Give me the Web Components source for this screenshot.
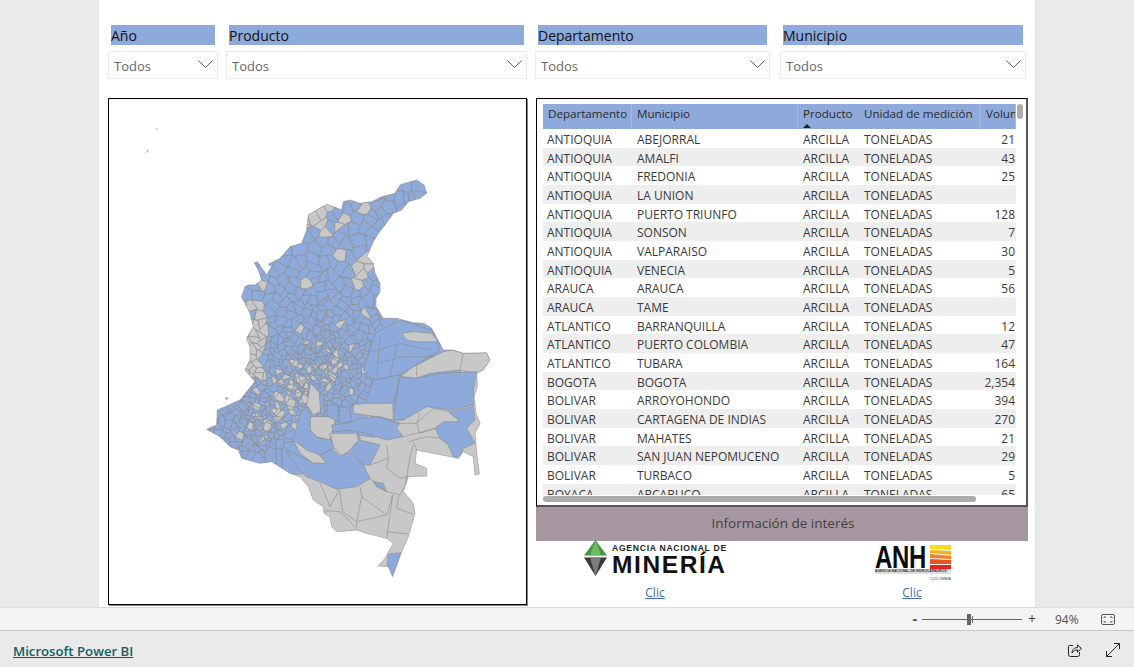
<!DOCTYPE html>
<html lang="es">
<head>
<meta charset="utf-8">
<title>Microsoft Power BI</title>
<style>
  html, body { margin: 0; height: 100%; overflow: hidden; background: #eaeaea; font-family: "Open Sans", "Noto Sans", sans-serif; }
</style>
</head>
<body>
<bi-report>
  <bi-slicer slot="slicers" label="Año" style="width:110px"></bi-slicer>
  <bi-slicer slot="slicers" label="Producto" style="width:301px"></bi-slicer>
  <bi-slicer slot="slicers" label="Departamento" style="width:235px"></bi-slicer>
  <bi-slicer slot="slicers" label="Municipio" style="width:246px;margin-left:2px"></bi-slicer>
  <bi-map slot="map"></bi-map>
  <bi-table slot="table"></bi-table>
  <bi-links slot="links"></bi-links>
</bi-report>
<bi-footer></bi-footer>

<script>
const BLUE = "#8eaadb";

class BiReport extends HTMLElement {
  constructor() {
    super();
    this.attachShadow({ mode: "open" });
    this.shadowRoot.innerHTML = `
<style>
  :host { display: block; width: 936px; height: 607px; margin-left: 99px; background: #fff; box-sizing: border-box; padding: 25px 0 0 9px; }
  .slicers { display: flex; gap: 8px; height: 54px; margin-bottom: 19px; }
  .body { display: flex; gap: 8px; height: 507px; }
  .right { width: 492px; margin-left: 1px; display: flex; flex-direction: column; }
  .band { height: 34px; background: #a797a1; color: #3f3f3f; font-size: 13.5px; line-height: 32px; text-align: center; padding-left: 2px; box-sizing: border-box; }
</style>
<div class="slicers"><slot name="slicers"></slot></div>
<div class="body">
  <slot name="map"></slot>
  <div class="right">
    <slot name="table"></slot>
    <div class="band">Información de interés</div>
    <slot name="links"></slot>
  </div>
</div>`;
  }
}

class BiSlicer extends HTMLElement {
  constructor() {
    super();
    this.attachShadow({ mode: "open" });
    this.shadowRoot.innerHTML = `
<style>
  :host { display: block; }
  .label { margin: 0 3px; height: 20px; background: ${BLUE}; color: #111; font-size: 14px; line-height: 21px; white-space: nowrap; overflow: hidden; }
  .box { margin-top: 6px; height: 25px; border: 1px solid #eaeaea; display: flex; align-items: center; justify-content: space-between; padding: 1px 4px 0 5px; color: #666; font-size: 13px; }
  svg { display: block; margin-top: -4px; }
</style>
<div class="label"></div>
<div class="box"><span>Todos</span>
  <svg width="15" height="8" viewBox="0 0 15 8"><path d="M.5.5l7 7 7-7" fill="none" stroke="#666" stroke-width="1"/></svg>
</div>`;
    this.shadowRoot.querySelector(".label").textContent = this.getAttribute("label");
  }
}

// coordinates below are in 1/3 px, origin at page (200,170)
const OUTLINE = [[600,45],[620,38],[650,30],[672,45],[680,70],[660,85],[625,95],[605,120],[580,130],[555,165],[535,190],[520,215],[500,260],[507,265],[520,280],[525,310],[540,340],[540,365],[528,385],[528,410],[550,445],[590,445],[640,458],[670,460],[695,475],[730,540],[760,540],[790,550],[860,548],[870,570],[850,600],[830,610],[832,650],[822,680],[828,730],[840,760],[825,790],[830,850],[838,912],[825,915],[820,860],[790,845],[775,865],[760,862],[650,840],[645,880],[680,895],[680,918],[625,920],[615,950],[610,965],[640,1000],[645,1030],[625,1100],[605,1145],[578,1220],[565,1190],[535,1188],[555,1165],[580,1120],[560,1105],[500,1090],[470,1080],[410,1085],[395,1070],[390,1040],[372,1030],[370,1010],[340,990],[325,950],[300,920],[270,910],[215,875],[180,880],[125,865],[115,840],[90,830],[60,800],[20,778],[50,765],[52,720],[75,710],[120,690],[165,635],[135,600],[150,570],[150,530],[140,505],[160,470],[150,430],[125,380],[135,350],[145,345],[165,345],[185,330],[175,300],[163,278],[172,275],[200,315],[215,290],[205,283],[240,265],[270,230],[305,220],[320,180],[325,135],[350,120],[380,103],[400,110],[425,120],[430,95],[450,90],[480,100],[515,95],[545,80],[585,70]];
const ANDES = [[600,30],[690,60],[530,200],[500,255],[545,340],[530,410],[555,450],[690,470],[730,540],[600,612],[520,640],[490,700],[460,730],[395,760],[330,730],[300,740],[260,840],[120,870],[15,780],[50,700],[130,600],[120,380],[160,270],[320,130],[430,85]];
const BIG = [
  ["b", [[525,490],[600,450],[695,480],[720,540],[600,615],[520,630],[490,600]]],
  ["g", [[600,620],[640,590],[700,560],[730,545],[760,540],[790,550],[860,548],[870,570],[850,600],[830,610],[780,600],[690,610],[650,625]]],
  ["g", [[605,490],[640,485],[695,490],[715,515],[650,515],[620,510]]],
  ["b", [[600,620],[650,625],[720,610],[830,605],[820,660],[822,705],[750,720],[680,710],[610,750],[580,750]]],
  ["b", [[520,630],[600,615],[580,700],[495,700]]],
  ["g", [[460,705],[495,700],[578,700],[580,750],[530,740],[460,730]]],
  ["g", [[330,740],[410,740],[395,790],[390,810],[350,800],[330,780]]],
  ["g", [[390,790],[470,790],[475,810],[450,840],[425,858],[400,830]]],
  ["g", [[332,640],[360,670],[372,720],[340,735],[320,705]]],
  ["g", [[280,810],[300,800],[340,840],[385,880],[340,880],[300,850]]],
  ["b", [[395,765],[440,760],[480,745],[540,740],[600,760],[590,775],[610,800],[560,810],[500,790],[450,780],[400,785]]],
  ["b", [[705,775],[730,755],[780,755],[745,725],[820,710],[825,750],[800,775],[825,820],[790,835],[780,865],[760,860],[745,825],[720,805]]],
  ["b", [[300,730],[320,710],[332,735],[330,780],[355,805],[395,810],[400,835],[360,855],[320,840],[280,810]]],
  ["b", [[260,840],[280,850],[340,880],[380,880],[360,855],[398,837],[420,858],[450,845],[490,885],[510,925],[470,950],[410,958],[370,940],[320,920],[300,900],[270,865]]],
  ["b", [[450,840],[480,810],[540,825],[510,885],[490,885]]],
  ["b", [[520,935],[550,940],[560,965],[530,950]]],
  ["b", [[565,1152],[603,1148],[578,1220],[562,1185]]],
  ["b", [[358,670],[372,690],[375,735],[362,730]]],
  ["b", [[380,705],[412,705],[415,755],[385,740]]],
  ["b", [[418,710],[450,715],[455,755],[420,758]]],
  ["g", [[650,760],[700,715],[745,725],[780,755],[730,755],[705,775],[660,790]]],
];
const LINES = [
  [[650,580],[650,622]], [[790,550],[780,600]], [[600,760],[650,760],[660,730]], [[610,800],[650,790],[705,775]],
  [[625,815],[680,800],[720,805]], [[650,840],[640,815]], [[560,825],[565,865],[510,885]], [[565,865],[560,895],[600,925],[625,920]],
  [[640,825],[630,860],[615,950]], [[510,925],[560,965],[600,975],[615,950]], [[360,940],[390,1010],[418,960]], [[418,960],[428,1025],[470,1055],[470,1080]],
  [[480,950],[485,980],[560,1035],[578,975]], [[485,980],[470,1055],[560,1035]], [[578,975],[560,1105]], [[560,1085],[625,1092]],
  [[375,1022],[420,1025],[465,1070]], [[595,980],[590,1015],[640,1033]], [[530,740],[600,760]], [[580,750],[610,750]],
  [[520,545],[600,520],[690,540]], [[530,580],[610,560],[700,560]], [[540,500],[530,620]], [[590,530],[570,615]]
];

function inPoly(x, y, poly) {
  let inside = false;
  for (let i = 0, j = poly.length - 1; i < poly.length; j = i++) {
    const [xi, yi] = poly[i], [xj, yj] = poly[j];
    if ((yi > y) !== (yj > y) && x < (xj - xi) * (y - yi) / (yj - yi) + xi) inside = !inside;
  }
  return inside;
}

function pts(p) { return p.map(a => a.join(",")).join(" "); }

// same warp for every cell, so neighbours keep sharing their corners
function warp([x, y]) {
  return [
    (x + 5 * Math.sin(y / 11) + 4 * Math.sin((x + y) / 7)).toFixed(1),
    (y + 5 * Math.sin(x / 9) + 4 * Math.sin((x - y) / 8)).toFixed(1)
  ].join(",");
}

// municipal mesh: voronoi cells from a seeded dart throw, denser over the Andes
function buildCells() {
  let seed = 20210;
  const rnd = () => (seed = (seed * 16807) % 2147483647) / 2147483647;
  const size = (x, y) => {
    const d = Math.min(Math.hypot(x - 370, y - 590), Math.hypot(x - 290, y - 640), Math.hypot(x - 190, y - 750) + 10);
    return Math.min(30, 5.5 + d * 0.075);
  };
  const sites = [];
  for (let n = 0; n < 22000; n++) {
    const x = 10 + rnd() * 730, y = 25 + rnd() * 860;
    if (!inPoly(x, y, ANDES)) continue;
    const s = size(x, y) * (0.7 + rnd() * 1.1);
    if (sites.some(q => Math.hypot(q[0] - x, q[1] - y) < s)) continue;
    sites.push([x, y]);
  }
  return sites.map(([x, y]) => {
    let cell = [[x - 70, y - 70], [x + 70, y - 70], [x + 70, y + 70], [x - 70, y + 70]];
    for (const [qx, qy] of sites) {
      const dx = qx - x, dy = qy - y;
      if ((!dx && !dy) || Math.abs(dx) > 140 || Math.abs(dy) > 140) continue;
      const mx = (x + qx) / 2, my = (y + qy) / 2;
      const side = p => (p[0] - mx) * dx + (p[1] - my) * dy;
      const next = [];
      cell.forEach((a, i) => {
        const b = cell[(i + 1) % cell.length], sa = side(a), sb = side(b);
        if (sa <= 0) next.push(a);
        if (sa * sb < 0) {
          const t = sa / (sa - sb);
          next.push([a[0] + (b[0] - a[0]) * t, a[1] + (b[1] - a[1]) * t]);
        }
      });
      cell = next;
    }
    let grey = 0.06;
    if (size(x, y) < 11) grey = 0.36;
    if (x < 200 && y > 400 && y < 630) grey = 0.8;
    if (x > 370 && x < 435 && y > 105 && y < 215) grey = 0.5;
    if (x > 460 && x < 512 && y > 265 && y < 345) grey = 0.85;
    if (x < 345 && y < 215) grey = 0.4;
    const fill = rnd() < grey ? "#c8c8c8" : BLUE;
    return `<polygon points="${cell.map(warp).join(" ")}" fill="${fill}"/>`;
  }).join("");
}

class BiMap extends HTMLElement {
  constructor() {
    super();
    this.attachShadow({ mode: "open" });
    const big = BIG.map(([c, p]) => `<polygon points="${pts(p)}" fill="${c === "b" ? BLUE : "#c8c8c8"}"/>`).join("");
    const lines = LINES.map(p => `<polyline points="${pts(p)}" fill="none"/>`).join("");
    this.shadowRoot.innerHTML = `
<style>
  :host { display: block; width: 419px; height: 507px; box-sizing: border-box; border: 1px solid #000; box-shadow: 1px 1px 0 #888; }
  svg { display: block; }
</style>
<svg width="417" height="505" viewBox="-273 -213 1251 1515">
  <defs><clipPath id="col"><polygon points="${pts(OUTLINE)}"/></clipPath></defs>
  <polygon points="${pts(OUTLINE)}" fill="#c8c8c8"/>
  <g clip-path="url(#col)" stroke="#8b8b8b" stroke-width="1.800" stroke-linejoin="round">
    ${buildCells()}
    ${big}
    ${lines}
  </g>
  <polygon points="${pts(OUTLINE)}" fill="none" stroke="#9a9a9a" stroke-width="2"/>
  <circle cx="-129" cy="-123" r="2.500" fill="#999"/>
  <path d="M-160-52l4-8" stroke="#999" stroke-width="3"/>
  <circle cx="80" cy="685" r="3.500" fill="${BLUE}" stroke="#999"/>
</svg>`;
  }
}

const ROWS = [
  ["ANTIOQUIA","ABEJORRAL","21"],["ANTIOQUIA","AMALFI","43"],["ANTIOQUIA","FREDONIA","25"],["ANTIOQUIA","LA UNION",""],
  ["ANTIOQUIA","PUERTO TRIUNFO","128"],["ANTIOQUIA","SONSON","7"],["ANTIOQUIA","VALPARAISO","30"],["ANTIOQUIA","VENECIA","5"],
  ["ARAUCA","ARAUCA","56"],["ARAUCA","TAME",""],["ATLANTICO","BARRANQUILLA","12"],["ATLANTICO","PUERTO COLOMBIA","47"],
  ["ATLANTICO","TUBARA","164"],["BOGOTA","BOGOTA","2,354"],["BOLIVAR","ARROYOHONDO","394"],["BOLIVAR","CARTAGENA DE INDIAS","270"],
  ["BOLIVAR","MAHATES","21"],["BOLIVAR","SAN JUAN NEPOMUCENO","29"],["BOLIVAR","TURBACO","5"],["BOYACA","ARCABUCO","65"]
];

class BiTable extends HTMLElement {
  constructor() {
    super();
    this.attachShadow({ mode: "open" });
    const rows = ROWS.map(([d, m, v], i) => `
      <div class="row ${i % 2 ? "alt" : ""}"><span>${d}</span><span>${m}</span><span>ARCILLA</span><span>TONELADAS</span><span class="num">${v}</span></div>`).join("");
    this.shadowRoot.innerHTML = `
<style>
  :host { display: block; position: relative; height: 409px; box-sizing: border-box; border: 1px solid #000; border-right: 2px solid #555; border-bottom: 2px solid #555; padding: 5px 0 0 6px; overflow: hidden; }
  .grid { width: 473px; height: 391px; overflow: hidden; font-size: 12px; color: #3a3a3a; }
  .row, .head { display: grid; grid-template-columns: 89px 166px 61px 122px 35px; }
  .head { height: 25px; background: ${BLUE}; color: #2a2a2a; font-size: 11.6px; }
  .head span { padding: 2px 0 0 5px; border-right: 1px solid #a3bae2; white-space: nowrap; overflow: hidden; position: relative; }
  .head span:nth-child(3) { border-right: 0; }
  .sort { position: absolute; left: 5px; bottom: 1px; width: 0; height: 0; padding: 0 !important; border-left: 4px solid transparent; border-right: 4px solid transparent; border-bottom: 4px solid #222; }
  .row { height: 18.68px; line-height: 21px; }
  .row.alt { background: #eee; }
  .row span { padding-left: 5px; white-space: nowrap; overflow: hidden; }
  .row span:first-child { padding-left: 4px; }
  .row .num { text-align: right; padding: 0 1px 0 0; }
  .hbar { position: absolute; left: 6px; top: 397px; width: 433px; height: 6px; border-radius: 3px; background: #adadad; }
  .vbar { position: absolute; left: 480px; top: 5px; width: 6px; height: 15px; border-radius: 3px; background: #adadad; }
</style>
<div class="grid">
  <div class="head"><span>Departamento</span><span>Municipio</span><span>Producto<i class="sort"></i></span><span>Unidad de medición</span><span>Volumen</span></div>
  ${rows}
</div>
<div class="hbar"></div>
<div class="vbar"></div>`;
  }
}

class BiLinks extends HTMLElement {
  constructor() {
    super();
    this.attachShadow({ mode: "open" });
    this.shadowRoot.innerHTML = `
<style>
  :host { display: flex; height: 64px; }
  .col { display: flex; flex-direction: column; align-items: center; flex: none; }
  .col.a { width: 238px; }
  .col.b { width: 120px; margin-left: 78px; }
  .logo { height: 43px; display: flex; }
  a { font-size: 12px; line-height: 17px; color: #3f6cb8; text-decoration: underline; }
  .anm { gap: 5px; width: 142px; }
  .anm svg { flex: none; }
  .anm .t { display: flex; flex-direction: column; color: #111; font-family: "Liberation Sans", sans-serif; font-weight: bold; white-space: nowrap; }
  .anm .t1 { font-size: 8.6px; line-height: 10px; margin-top: 2px; letter-spacing: .72px; color: #222; }
  .anm .t2 { font-size: 24.5px; line-height: 22px; letter-spacing: 1.6px; margin: 1px 0 0 0; }
  .anh { width: 76px; position: relative; left: 1px; }
  .anh .big { width: 52px; overflow: visible; font-family: "Liberation Sans", sans-serif; font-weight: bold; font-size: 31.5px; line-height: 24px; height: 24px; margin-top: 4px; letter-spacing: -.4px; color: #0a0a0a; transform: scaleX(.76); transform-origin: left top; white-space: nowrap; }
  .anh svg { position: absolute; left: 55px; top: 4px; }
  .anh .sm { font-family: "Liberation Sans", sans-serif; font-size: 3.4px; line-height: 5px; font-weight: bold; color: #333; white-space: nowrap; background: #ddd; width: 76px; }
  .anh .co { font-family: "Liberation Sans", sans-serif; font-size: 4px; line-height: 6px; color: #444; text-align: right; margin-top: 2px; }
</style>
<div class="col a">
  <div class="logo anm">
    <svg width="23" height="36" viewBox="0 0 23 36" style="margin-top:-1px">
      <path d="M11.500 0L23 15.500H0z" fill="#3f9a45"/>
      <path d="M11.500 0L17 15.500H6z" fill="#6bbd5a"/>
      <path d="M0 17.500H23L11.500 36z" fill="#3a3a3a"/>
      <path d="M6 17.500H17L11.500 36z" fill="#7b7b7b"/>
    </svg>
    <div class="t"><span class="t1">AGENCIA NACIONAL DE</span><span class="t2">MINERÍA</span></div>
  </div>
  <a>Clic</a>
</div>
<div class="col b">
  <div class="logo anh" style="display:block">
    <div class="big">ANH</div>
    <svg width="21" height="24" viewBox="0 0 21 24">
      <rect width="21" height="24" fill="#fff"/>
      <path d="M0 0h21v5l-21-1z" fill="#f7dc1e"/>
      <path d="M0 5l21 1v4l-21-2z" fill="#f6b21b"/>
      <path d="M0 9l21 2v3l-21-1z" fill="#ef7f22"/>
      <path d="M0 14l21 1v4h-21z" fill="#e8551f"/>
      <path d="M0 20h21v4h-21z" fill="#e2231f"/>
    </svg>
    <div class="sm">AGENCIA NACIONAL DE HIDROCARBUROS</div>
    <div class="co">COLOMBIA</div>
  </div>
  <a>Clic</a>
</div>`;
  }
}

class BiFooter extends HTMLElement {
  constructor() {
    super();
    this.attachShadow({ mode: "open" });
    this.shadowRoot.innerHTML = `
<style>
  :host { display: block; height: 60px; }
  .zoom { height: 22px; background: #f3f3f3; border-top: 1px solid #dcdcdc; border-bottom: 1px solid #c8c8c8; display: flex; align-items: center; justify-content: flex-end; color: #555; font-size: 12px; }
  .minus, .plus { font-size: 14px; line-height: 14px; color: #444; }
  .minus { font-weight: bold; }
  .slider { position: relative; width: 100px; height: 1px; background: #666; margin: 0 6px 0 5px; }
  .thumb { position: absolute; left: 45px; top: -5px; width: 4px; height: 11px; background: #666; }
  .tick { position: absolute; left: 50px; top: -3px; width: 1px; height: 7px; background: #666; }
  .pct { margin-left: 19px; width: 24px; }
  .fit { margin: 0 19px 0 22px; display: block; }
  .bottom { height: 36px; display: flex; align-items: center; justify-content: space-between; padding: 3px 13px 0; box-sizing: border-box; }
  a { color: #10605f; font-size: 13.2px; font-weight: 600; text-decoration: underline; }
  .icons { display: flex; gap: 24px; margin: -2px 1px 0 0; }
  svg { display: block; }
</style>
<div class="zoom">
  <span class="minus">-</span>
  <div class="slider"><div class="thumb"></div><div class="tick"></div></div>
  <span class="plus">+</span>
  <span class="pct">94%</span>
  <svg class="fit" width="14" height="11" viewBox="0 0 14 11" fill="none" stroke="#555"><rect x=".5" y=".5" width="13" height="10" rx="1.500"/><path d="M3 4V3h2M9 3h2v1M11 7v1H9M5 8H3V7"/></svg>
</div>
<div class="bottom">
  <a>Microsoft Power BI</a>
  <div class="icons">
    <svg width="14" height="14" viewBox="0 0 14 14" fill="none" stroke="#222"><path d="M5 2.500H1.500a1 1 0 0 0-1 1v8a2 2 0 0 0 2 2h7a2 2 0 0 0 2-2V9"/><path d="M4 10c0-4 3-5.500 5.500-5.500V2L13.500 5.500 9.500 9V6.800C7 6.800 5.500 8 4 10z"/></svg>
    <svg width="14" height="14" viewBox="0 0 14 14" fill="none" stroke="#222"><path d="M.5 13.500L13.500.5M8 .5h5.500V6M6 13.500H.5V8"/></svg>
  </div>
</div>`;
  }
}

customElements.define("bi-report", BiReport);
customElements.define("bi-slicer", BiSlicer);
customElements.define("bi-map", BiMap);
customElements.define("bi-table", BiTable);
customElements.define("bi-links", BiLinks);
customElements.define("bi-footer", BiFooter);
</script>
</body>
</html>
